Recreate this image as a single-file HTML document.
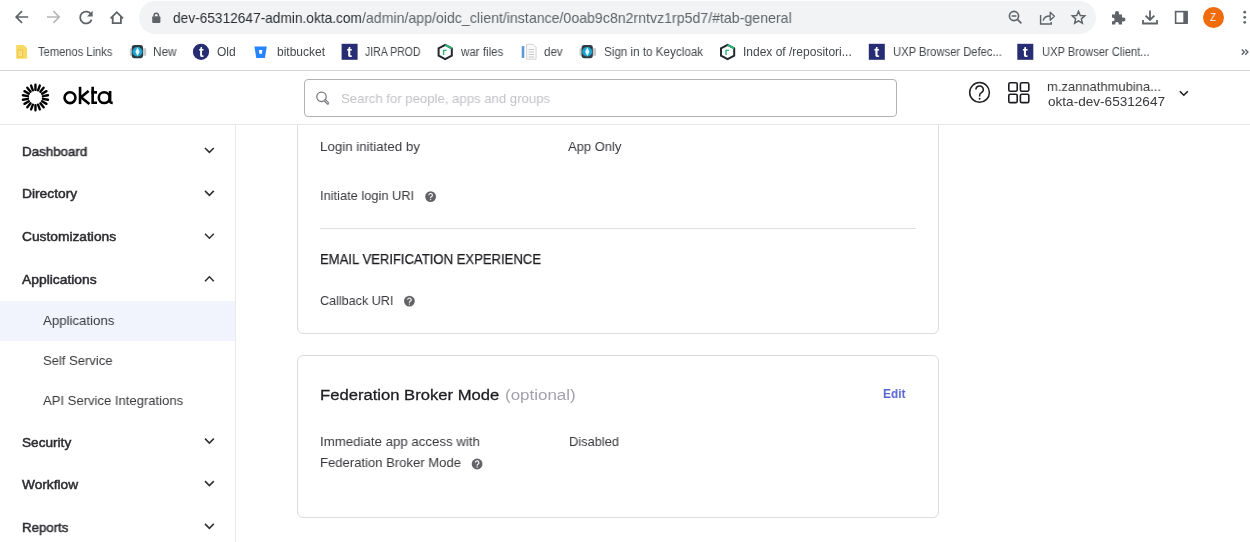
<!DOCTYPE html>
<html><head><meta charset="utf-8">
<style>
html,body{margin:0;padding:0;width:1250px;height:542px;overflow:hidden;background:#fff;font-family:"Liberation Sans",sans-serif;}
.a{position:absolute;}
.t{position:absolute;line-height:1;white-space:nowrap;will-change:transform;}
svg{position:absolute;left:0;top:0;overflow:visible;}
</style></head><body>
<!-- ===== content cards (drawn first, header overlays top) ===== -->
<div class="a" style="left:297px;top:90px;width:640px;height:242px;border:1px solid #dcdcdd;border-radius:6px;box-sizing:content-box;"></div>
<div class="a" style="left:320px;top:228px;width:596px;height:1px;background:#e0e0e1;"></div>
<div class="a" style="left:297px;top:355px;width:640px;height:161px;border:1px solid #dcdcdd;border-radius:6px;"></div>

<!-- sidebar -->
<div class="a" style="left:0;top:301px;width:235px;height:40px;background:#f2f4fd;"></div>
<div class="a" style="left:235px;top:124px;width:1px;height:418px;background:#e9e9ea;"></div>

<!-- okta header -->
<div class="a" style="left:0;top:71px;width:1250px;height:53px;background:#fff;"></div>
<div class="a" style="left:0;top:124px;width:1250px;height:1px;background:#e6e6e7;"></div>
<div class="a" style="left:304px;top:79px;width:591px;height:36px;border:1px solid #b2b2b6;border-radius:4px;"></div>

<!-- chrome -->
<div class="a" style="left:0;top:0;width:1250px;height:70px;background:#fff;"></div>
<div class="a" style="left:0;top:70px;width:1250px;height:1px;background:#d6d6d8;"></div>
<div class="a" style="left:139px;top:1px;width:957px;height:33px;border-radius:16.5px;background:#f1f3f4;"></div>
<div class="a" style="left:1202.7px;top:6.7px;width:21.2px;height:21.2px;border-radius:50%;background:#f06b0c;"></div>
<div class="t" style="left:1210.2px;top:12.4px;font-size:11.5px;color:#fff;transform:scaleX(0.85);transform-origin:0 0;">Z</div>

<svg width="1250" height="542">
  <!-- nav -->
  <g fill="none" stroke="#5f6368" stroke-width="1.7" stroke-linecap="butt">
    <path d="M28.2 17H16.2M22 11.2L16.2 17l5.8 5.8"/>
  </g>
  <g fill="none" stroke="#b5b7ba" stroke-width="1.7">
    <path d="M47 17h12.2M53.4 11.2L59.2 17l-5.8 5.8"/>
  </g>
  <path d="M91.2 14.6A5.9 5.9 0 1 0 91.6 19.6" fill="none" stroke="#5f6368" stroke-width="1.8"/>
  <path d="M92.6 10.8v5.6h-5.6z" fill="#5f6368"/>
  <path d="M110.6 18.3L116.8 12.2L123 18.3M112.7 16.6V23.1H120.9V16.6" fill="none" stroke="#5f6368" stroke-width="1.8"/>
  <!-- lock -->
  <rect x="152.2" y="16.2" width="8.2" height="6.8" rx="1" fill="#5f6368"/>
  <path d="M154.1 16.6v-1.2a2.2 2.2 0 0 1 4.4 0v1.2" fill="none" stroke="#5f6368" stroke-width="1.5"/>
  <!-- right omnibox icons -->
  <g fill="none" stroke="#5f6368" stroke-width="1.6">
    <circle cx="1014" cy="16" r="4.6"/>
    <path d="M1017.4 19.4l4 4M1011.6 16h4.8"/>
    <path d="M1040.6 15v8.9h10.6v-2" stroke-width="1.45"/>
    <path d="M1043.2 20.6c0.6-3 3-4.6 6.8-4.6" stroke-width="1.45"/>
    <path d="M1050.2 12.2l4.2 4-4.2 4z" stroke-width="1.3" stroke-linejoin="round"/>
    <path d="M1078.50 11.30L1080.26 15.47L1084.78 15.86L1081.35 18.83L1082.38 23.24L1078.50 20.90L1074.62 23.24L1075.65 18.83L1072.22 15.86L1076.74 15.47z" stroke-linejoin="miter" stroke-width="1.45"/>
  </g>
  <!-- puzzle -->
  <path d="M1112 14.5h3v-1.5a2 2 0 0 1 4 0v1.5h3v3h1.5a2 2 0 0 1 0 4h-1.5v3h-3.3v-1.4a1.8 1.8 0 0 0-3.4 0v1.4h-3.3v-3.3h1.4a1.8 1.8 0 0 0 0-3.4h-1.4z" fill="#5f6368"/>
  <!-- download -->
  <g fill="none" stroke="#5f6368" stroke-width="1.8">
    <path d="M1150 10.5v9M1145.6 15.6l4.4 4.4 4.4-4.4M1143 20v3.5h14v-3.5"/>
  </g>
  <!-- sidebar icon -->
  <rect x="1175.6" y="11.6" width="11.4" height="11.6" fill="none" stroke="#5f6368" stroke-width="1.6"/>
  <rect x="1183.3" y="11.6" width="4.5" height="11.6" fill="#5f6368"/>
  <!-- kebab -->
  <g fill="#5f6368"><circle cx="1244.7" cy="12.2" r="1.35"/><circle cx="1244.7" cy="17.3" r="1.35"/><circle cx="1244.7" cy="22.3" r="1.35"/></g>

  <!-- bookmark icons -->
  <g>
    <path d="M16.2 45h7.6l3.3 3.3v10.5h-10.9z" fill="#f8d962"/>
    <g fill="#f5e7a8"><rect x="18.5" y="50.5" width="1.4" height="1.4"/><rect x="20.6" y="50.5" width="1.4" height="1.4"/><rect x="18.5" y="52.8" width="1.4" height="1.4"/><rect x="20.6" y="52.8" width="1.4" height="1.4"/><rect x="18.5" y="55.1" width="1.4" height="1.4"/><rect x="20.6" y="55.1" width="1.4" height="1.4"/></g>
    <rect x="17.9" y="50" width="4.8" height="7" fill="none" stroke="#e9bd3c" stroke-width="0.7"/>
  </g>
  <!-- New (keycloak-ish) -->
  <g transform="translate(0 0)">
    <rect x="129.8" y="48.3" width="16.4" height="7.4" fill="#c6c8c9"/>
    <rect x="131.8" y="45" width="11.2" height="13.2" rx="2.6" fill="#2f3a40"/>
    <ellipse cx="137.4" cy="51.7" rx="5.1" ry="4.7" fill="#1aa6d2"/>
    <path d="M137.5 47.4l2.2 4.3-2.2 4.3-2.2-4.3z" fill="#e6f4f8"/>
  </g>
  <!-- Old: circle t -->
  <circle cx="201" cy="51.8" r="8.1" fill="#262d72"/>
  <text x="201.3" y="57" font-family="Liberation Sans" font-weight="700" font-size="14" fill="#fff" text-anchor="middle">t</text>
  <!-- bitbucket -->
  <path d="M254.4 46.6h12.4l-1.9 11.3h-8.6z" fill="#2684ff"/>
  <path d="M258.9 49.9h3.4l-0.4 3.8h-2.6z" fill="#fff"/>
  <!-- JIRA PROD square t -->
  <rect x="341.6" y="43.8" width="16" height="16" fill="#262d72"/>
  <text x="349.6" y="57.3" font-family="Liberation Sans" font-weight="700" font-size="15" fill="#fff" text-anchor="middle">t</text>
  <!-- war files hexagon -->
  <path d="M445.2 44.8l6.6 3.6v7.2l-6.6 3.6-6.6-3.6v-7.2z" fill="none" stroke="#24292e" stroke-width="2"/>
  <path d="M445.2 44.8l6.6 3.6" fill="none" stroke="#2bb673" stroke-width="2"/>
  <path d="M443.6 55v-4.6h3" fill="none" stroke="#2bb673" stroke-width="1.4"/>
  <!-- dev doc -->
  <rect x="521.7" y="46.1" width="2.6" height="11.8" fill="#5b9bd5"/>
  <path d="M526.6 44.3h6.5l3 3v11.9h-9.5z" fill="#fafafa" stroke="#cfcfcf" stroke-width="0.9"/>
  <g stroke="#c4c4c4" stroke-width="0.9"><path d="M528.5 49.5h5.6M528.5 52h5.6M528.5 54.5h5.6M528.5 57h5.6"/></g>
  <!-- keycloak -->
  <g transform="translate(449.8 0)">
    <rect x="129.8" y="48.3" width="16.4" height="7.4" fill="#c6c8c9"/>
    <rect x="131.8" y="45" width="11.2" height="13.2" rx="2.6" fill="#2f3a40"/>
    <ellipse cx="137.4" cy="51.7" rx="5.1" ry="4.7" fill="#1aa6d2"/>
    <path d="M137.5 47.4l2.2 4.3-2.2 4.3-2.2-4.3z" fill="#e6f4f8"/>
  </g>
  <!-- Index hexagon -->
  <path d="M727.6 44.8l6.6 3.6v7.2l-6.6 3.6-6.6-3.6v-7.2z" fill="none" stroke="#24292e" stroke-width="2"/>
  <path d="M727.6 44.8l6.6 3.6" fill="none" stroke="#2bb673" stroke-width="2"/>
  <path d="M726 55v-4.6h3" fill="none" stroke="#2bb673" stroke-width="1.4"/>
  <!-- UXP squares -->
  <rect x="868.8" y="43.8" width="16" height="16" fill="#262d72"/>
  <text x="876.8" y="57.3" font-family="Liberation Sans" font-weight="700" font-size="15" fill="#fff" text-anchor="middle">t</text>
  <rect x="1017.3" y="43.8" width="16" height="16" fill="#262d72"/>
  <text x="1025.3" y="57.3" font-family="Liberation Sans" font-weight="700" font-size="15" fill="#fff" text-anchor="middle">t</text>
  <!-- chevron » -->
  <path d="M1241.8 49.5l2.6 2.6-2.6 2.6M1245.3 49.5l2.6 2.6-2.6 2.6" fill="none" stroke="#5f6368" stroke-width="1.4"/>

  <!-- okta logo -->
  <path d="M35.45 89.90L35.45 84.80M38.05 90.36L39.79 85.57M40.34 91.68L43.61 87.77M42.03 93.70L46.45 91.15M42.93 96.18L47.96 95.29M42.93 98.82L47.96 99.71M42.03 101.30L46.45 103.85M40.34 103.32L43.61 107.23M38.05 104.64L39.79 109.43M35.45 105.10L35.45 110.20M32.85 104.64L31.11 109.43M30.56 103.32L27.29 107.23M28.87 101.30L24.45 103.85M27.97 98.82L22.94 99.71M27.97 96.18L22.94 95.29M28.87 93.70L24.45 91.15M30.56 91.68L27.29 87.77M32.85 90.36L31.11 85.57" fill="none" stroke="#000" stroke-width="2.4" stroke-linecap="round"/>
  <g fill="none" stroke="#000" stroke-width="2.6">
    <circle cx="70" cy="97.65" r="5.45"/>
    <path d="M80.05 86.8V104.1"/>
    <path d="M88.6 91.1L81 97.2L89.4 104.1"/>
    <path d="M92.65 86.8V102.8H97"/>
    <path d="M91.4 92.35H97"/>
    <circle cx="104.2" cy="97.65" r="5.4"/>
    <path d="M110.1 91.1V101.6Q110.3 102.9 112.7 102.9"/>
  </g>
  <!-- search icon -->
  <circle cx="321.5" cy="96.8" r="4.7" fill="none" stroke="#77777f" stroke-width="1.25"/>
  <path d="M325.2 100.6l2.6 2.6" fill="none" stroke="#77777f" stroke-width="2.9" stroke-linecap="round"/>
  <path d="M325.2 100.6l2.6 2.6" fill="none" stroke="#fff" stroke-width="0.9" stroke-linecap="round"/>
  <!-- help -->
  <circle cx="979.55" cy="92.4" r="9.85" fill="none" stroke="#1d1d21" stroke-width="1.5"/>
  <path d="M975.9 89.6a3.7 3.6 0 1 1 5.5 3.1c-1.2 0.7-1.8 1.5-1.8 3v0.9" fill="none" stroke="#1d1d21" stroke-width="1.5"/>
  <circle cx="979.6" cy="98.7" r="0.95" fill="#1d1d21"/>
  <!-- grid -->
  <g fill="none" stroke="#1d1d21" stroke-width="1.6">
    <rect x="1008.8" y="82.8" width="8.4" height="8.4" rx="1.4"/>
    <rect x="1020.4" y="82.8" width="8.4" height="8.4" rx="1.4"/>
    <rect x="1008.8" y="94.2" width="8.4" height="8.4" rx="1.4"/>
    <rect x="1020.4" y="94.2" width="8.4" height="8.4" rx="1.4"/>
  </g>
  <!-- user chevron -->
  <path d="M1179.8 91.2l4 4 4-4" fill="none" stroke="#1d1d21" stroke-width="1.6"/>

  <!-- sidebar chevrons -->
  <g fill="none" stroke="#303035" stroke-width="1.6">
    <path d="M205 148l4.4 4.4 4.4-4.4"/>
    <path d="M205 190.9l4.4 4.4 4.4-4.4"/>
    <path d="M205 233.8l4.4 4.4 4.4-4.4"/>
    <path d="M205 281.2l4.4-4.4 4.4 4.4"/>
    <path d="M205 438.6l4.4 4.4 4.4-4.4"/>
    <path d="M205 481.1l4.4 4.4 4.4-4.4"/>
    <path d="M205 523.9l4.4 4.4 4.4-4.4"/>
  </g>

  <!-- ? info icons -->
  <g fill="#636367">
    <circle cx="430.6" cy="196.6" r="5.4"/>
    <circle cx="409.4" cy="301.1" r="5.4"/>
    <circle cx="477.1" cy="464.0" r="5.4"/>
  </g>
  <g fill="none" stroke="#fff" stroke-width="1.15">
    <path d="M428.9 195.2a1.75 1.75 0 1 1 2.5 1.6c-0.5 0.3-0.8 0.6-0.8 1.2v0.3"/>
    <path d="M407.7 299.7a1.75 1.75 0 1 1 2.5 1.6c-0.5 0.3-0.8 0.6-0.8 1.2v0.3"/>
    <path d="M475.4 462.6a1.75 1.75 0 1 1 2.5 1.6c-0.5 0.3-0.8 0.6-0.8 1.2v0.3"/>
  </g>
  <g fill="#fff">
    <circle cx="430.6" cy="199.6" r="0.65"/>
    <circle cx="409.4" cy="304.1" r="0.65"/>
    <circle cx="477.1" cy="467.0" r="0.65"/>
  </g>
</svg>

<div class="t" style="left:172.7px;top:10.53px;font-size:14.5px;font-weight:400;color:#2a2d31;transform:scaleX(0.9449);transform-origin:0 0;">dev-65312647-admin.okta.com</div>
<div class="t" style="left:361.6px;top:10.53px;font-size:14.5px;font-weight:400;color:#5f6368;transform:scaleX(0.9761);transform-origin:0 0;">/admin/app/oidc_client/instance/0oab9c8n2rntvz1rp5d7/#tab-general</div>
<div class="t" style="left:38.4px;top:45.54px;font-size:12px;font-weight:400;color:#45484c;transform:scaleX(0.9295);transform-origin:0 0;">Temenos Links</div>
<div class="t" style="left:153.3px;top:45.54px;font-size:12px;font-weight:400;color:#45484c;transform:scaleX(0.9785);transform-origin:0 0;">New</div>
<div class="t" style="left:216.8px;top:45.54px;font-size:12px;font-weight:400;color:#45484c;transform:scaleX(0.9846);transform-origin:0 0;">Old</div>
<div class="t" style="left:276.7px;top:45.54px;font-size:12px;font-weight:400;color:#45484c;transform:scaleX(1.0014);transform-origin:0 0;">bitbucket</div>
<div class="t" style="left:365.3px;top:45.54px;font-size:12px;font-weight:400;color:#45484c;transform:scaleX(0.8760);transform-origin:0 0;">JIRA PROD</div>
<div class="t" style="left:461.2px;top:45.54px;font-size:12px;font-weight:400;color:#45484c;transform:scaleX(0.9610);transform-origin:0 0;">war files</div>
<div class="t" style="left:544.4px;top:45.54px;font-size:12px;font-weight:400;color:#45484c;transform:scaleX(0.9659);transform-origin:0 0;">dev</div>
<div class="t" style="left:603.6px;top:45.54px;font-size:12px;font-weight:400;color:#45484c;transform:scaleX(0.9710);transform-origin:0 0;">Sign in to Keycloak</div>
<div class="t" style="left:743.3px;top:45.54px;font-size:12px;font-weight:400;color:#45484c;transform:scaleX(0.9997);transform-origin:0 0;">Index of /repositori...</div>
<div class="t" style="left:892.5px;top:45.54px;font-size:12px;font-weight:400;color:#45484c;transform:scaleX(0.9340);transform-origin:0 0;">UXP Browser Defec...</div>
<div class="t" style="left:1041.7px;top:45.54px;font-size:12px;font-weight:400;color:#45484c;transform:scaleX(0.9281);transform-origin:0 0;">UXP Browser Client...</div>
<div class="t" style="left:340.9px;top:91.74px;font-size:13.3px;font-weight:400;color:#c2c2c8;transform:scaleX(0.9885);transform-origin:0 0;">Search for people, apps and groups</div>
<div class="t" style="left:1047.0px;top:79.57px;font-size:13.5px;font-weight:400;color:#38383d;transform:scaleX(0.9614);transform-origin:0 0;">m.zannathmubina...</div>
<div class="t" style="left:1048.3px;top:95.47px;font-size:13.5px;font-weight:400;color:#38383d;transform:scaleX(1.0056);transform-origin:0 0;">okta-dev-65312647</div>
<div class="t" style="left:21.6px;top:144.67px;font-size:13.5px;font-weight:400;color:#2c2c31;transform:scaleX(0.9887);transform-origin:0 0;-webkit-text-stroke:0.5px #2c2c31;">Dashboard</div>
<div class="t" style="left:21.6px;top:187.47px;font-size:13.5px;font-weight:400;color:#2c2c31;transform:scaleX(1.0219);transform-origin:0 0;-webkit-text-stroke:0.5px #2c2c31;">Directory</div>
<div class="t" style="left:21.6px;top:230.37px;font-size:13.5px;font-weight:400;color:#2c2c31;transform:scaleX(1.0195);transform-origin:0 0;-webkit-text-stroke:0.5px #2c2c31;">Customizations</div>
<div class="t" style="left:21.6px;top:273.17px;font-size:13.5px;font-weight:400;color:#2c2c31;transform:scaleX(1.0261);transform-origin:0 0;-webkit-text-stroke:0.5px #2c2c31;">Applications</div>
<div class="t" style="left:43.2px;top:313.77px;font-size:13.5px;font-weight:400;color:#38383d;transform:scaleX(0.9808);transform-origin:0 0;">Applications</div>
<div class="t" style="left:43.2px;top:353.57px;font-size:13.5px;font-weight:400;color:#38383d;transform:scaleX(0.9649);transform-origin:0 0;">Self Service</div>
<div class="t" style="left:43.2px;top:393.57px;font-size:13.5px;font-weight:400;color:#38383d;transform:scaleX(0.9680);transform-origin:0 0;">API Service Integrations</div>
<div class="t" style="left:21.9px;top:435.57px;font-size:13.5px;font-weight:400;color:#2c2c31;transform:scaleX(1.0086);transform-origin:0 0;-webkit-text-stroke:0.5px #2c2c31;">Security</div>
<div class="t" style="left:21.9px;top:478.07px;font-size:13.5px;font-weight:400;color:#2c2c31;transform:scaleX(1.0151);transform-origin:0 0;-webkit-text-stroke:0.5px #2c2c31;">Workflow</div>
<div class="t" style="left:21.9px;top:520.87px;font-size:13.5px;font-weight:400;color:#2c2c31;transform:scaleX(0.9814);transform-origin:0 0;-webkit-text-stroke:0.5px #2c2c31;">Reports</div>
<div class="t" style="left:320.2px;top:139.57px;font-size:13.5px;font-weight:400;color:#38383d;transform:scaleX(0.9869);transform-origin:0 0;">Login initiated by</div>
<div class="t" style="left:568.3px;top:139.57px;font-size:13.5px;font-weight:400;color:#38383d;transform:scaleX(0.9616);transform-origin:0 0;">App Only</div>
<div class="t" style="left:320.2px;top:189.17px;font-size:13.5px;font-weight:400;color:#38383d;transform:scaleX(0.9509);transform-origin:0 0;">Initiate login URI</div>
<div class="t" style="left:320.2px;top:252.45px;font-size:14px;font-weight:400;color:#1d1d21;transform:scaleX(0.9345);transform-origin:0 0;-webkit-text-stroke:0.25px #1d1d21;">EMAIL VERIFICATION EXPERIENCE</div>
<div class="t" style="left:320.2px;top:293.57px;font-size:13.5px;font-weight:400;color:#38383d;transform:scaleX(0.9317);transform-origin:0 0;">Callback URI</div>
<div class="t" style="left:320.2px;top:386.68px;font-size:15.5px;font-weight:400;color:#1d1d21;transform:scaleX(1.0722);transform-origin:0 0;-webkit-text-stroke:0.3px #1d1d21;">Federation Broker Mode</div>
<div class="t" style="left:505.4px;top:386.68px;font-size:15.5px;font-weight:400;color:#a2a2aa;transform:scaleX(1.0940);transform-origin:0 0;">(optional)</div>
<div class="t" style="left:882.7px;top:387.07px;font-size:13.5px;font-weight:700;color:#5465cf;transform:scaleX(0.8824);transform-origin:0 0;">Edit</div>
<div class="t" style="left:320.2px;top:434.77px;font-size:13.5px;font-weight:400;color:#38383d;transform:scaleX(0.9826);transform-origin:0 0;">Immediate app access with</div>
<div class="t" style="left:320.2px;top:456.17px;font-size:13.5px;font-weight:400;color:#38383d;transform:scaleX(0.9686);transform-origin:0 0;">Federation Broker Mode</div>
<div class="t" style="left:568.8px;top:434.77px;font-size:13.5px;font-weight:400;color:#38383d;transform:scaleX(0.9518);transform-origin:0 0;">Disabled</div>
</body></html>
